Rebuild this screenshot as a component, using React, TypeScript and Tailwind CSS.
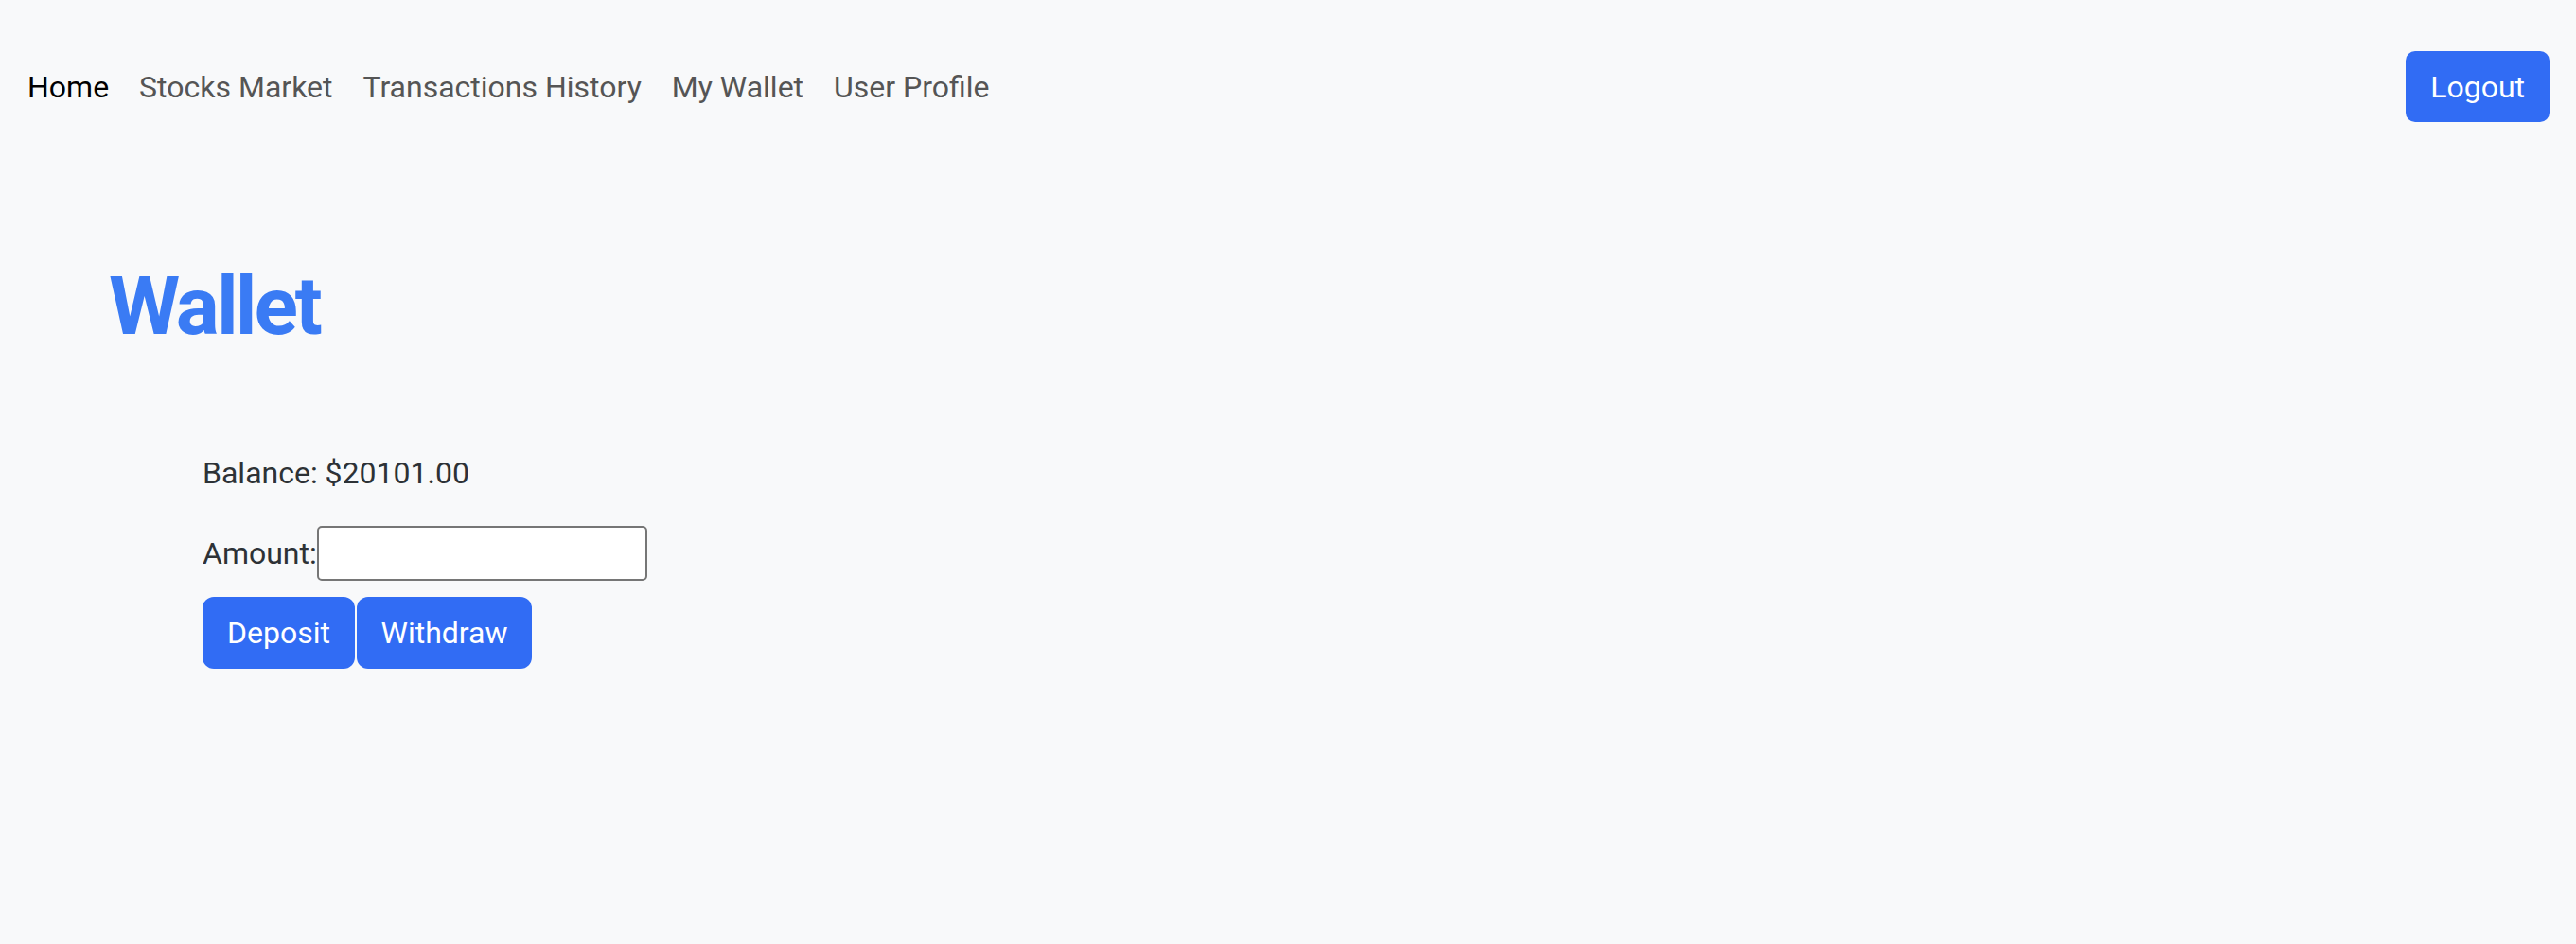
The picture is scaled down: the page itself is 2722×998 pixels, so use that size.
import React, { useState } from 'react';

const navLinks = ['Home', 'Stocks Market', 'Transactions History', 'My Wallet', 'User Profile'];

export default function App() {
  const [amount, setAmount] = useState('');
  const balance = 20101;

  return (
    <div className="min-h-[998px] bg-[#f8f9fa] font-['Roboto','Liberation_Sans',sans-serif]">
      {/* 顶部导航 */}
      <nav className="h-[183px] flex items-center justify-between pl-[29px] pr-[28px]">
        <ul className="flex items-center gap-[32px]">
          {navLinks.map((link, i) => (
            <li key={link}>
              <a
                href="#"
                className={`text-[32px] leading-[38px] ${i === 0 ? 'text-black' : 'text-[#555555]'}`}
              >
                {link}
              </a>
            </li>
          ))}
        </ul>
        <button className="h-[75px] px-[26px] rounded-[10px] bg-[#316cf4] text-white text-[32px] leading-[38px]">
          Logout
        </button>
      </nav>

      <main className="px-[115px]">
        <h1 className="mt-[91px] text-[86px] leading-[100px] font-bold tracking-[-3px] text-[#3a7bf4]">Wallet</h1>

        {/* 钱包操作 */}
        <div className="pl-[99px] mt-[107px] text-[32px] leading-[38px] text-[#2d3236]">
          <p>Balance: ${balance.toFixed(2)}</p>
          <div className="mt-[37px] flex items-center h-[58px]">
            <label htmlFor="amount">Amount:</label>
            <input
              id="amount"
              type="number"
              value={amount}
              onChange={(e) => setAmount(e.target.value)}
              className="w-[349px] h-[58px] bg-white border-2 border-[#767676] rounded-[5px] px-2 outline-none"
            />
          </div>
          <div className="mt-[17px] flex gap-[2px]">
            <button className="h-[76px] w-[161px] rounded-[12px] bg-[#316cf4] text-white">Deposit</button>
            <button className="h-[76px] w-[185px] rounded-[12px] bg-[#316cf4] text-white">Withdraw</button>
          </div>
        </div>
      </main>
    </div>
  );
}
